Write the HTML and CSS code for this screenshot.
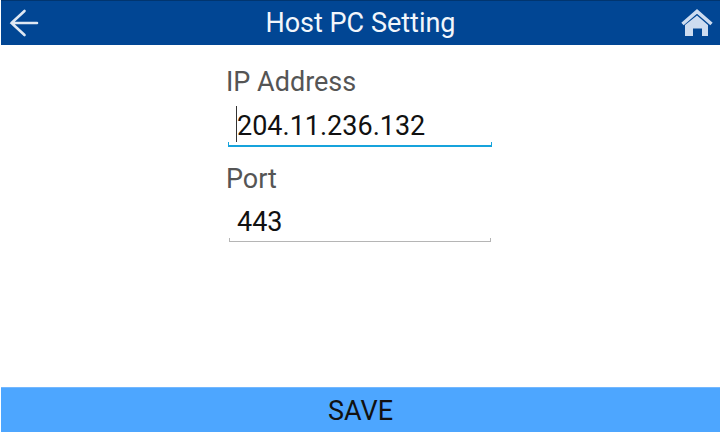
FILE: index.html
```html
<!DOCTYPE html>
<html lang="en">
<head>
<meta charset="utf-8">
<title>Host PC Setting</title>
<link rel="stylesheet" href="styles.css">
</head>
<body>
<div class="screen">
  <header class="topbar">
    <svg class="icon-back" width="40" height="44" viewBox="0 0 40 44" aria-hidden="true"><path d="M23.5 10 L10.5 22 L23.5 34 M10.5 22 H36" fill="none" stroke="#dfe8f3" stroke-width="2.6" stroke-linecap="round" stroke-linejoin="miter"/></svg>
    <h1 class="title">Host PC Setting</h1>
    <svg class="icon-home" width="34" height="44" viewBox="0 0 34 44" aria-hidden="true"><path d="M2.5 23 L17 10.5 L31.5 23" fill="none" stroke="#cddcf0" stroke-width="3.6"/><path d="M5 24 L17 14.5 L28 24 V35 H22 V27.5 H13 V35 H5 Z" fill="#cddcf0"/></svg>
  </header>
  <main class="form">
    <div class="field">
      <label class="label">IP Address</label>
      <div class="input active"><span class="caret"></span>204.11.236.132</div>
    </div>
    <div class="field">
      <label class="label">Port</label>
      <div class="input">443</div>
    </div>
  </main>
  <button class="save">SAVE</button>
</div>
</body>
</html>
```
FILE: styles.css
```css
* { box-sizing: border-box; }
html, body { margin: 0; padding: 0; background: #fff; }
body { width: 722px; height: 435px; overflow: hidden; font-family: Roboto, "Liberation Sans", sans-serif; }
.screen { display: flex; flex-direction: column; height: 432px; margin: 0 1px; width: 719px; }
.topbar { height: 45px; background: #014694; border-top: 1px solid #01356f; padding-right: 6px; display: flex; align-items: center; justify-content: space-between; flex: none; }
.title { margin: 0; font-size: 27px; font-weight: 400; color: #f2f6fb; line-height: 46px; }
.icon-back, .icon-home { flex: none; display: block; }
.form { flex: 1; display: flex; flex-direction: column; align-items: flex-start; padding: 21px 0 0 225px; gap: 16px; }
.field { display: flex; flex-direction: column; width: 266px; }
.label { font-size: 27px; line-height: 32px; color: #555; }
.input { position: relative; margin-left: 3px; height: 47px; width: 262px; padding: 13px 0 0 8px; font-size: 27px; line-height: 28px; color: #111; border-bottom: 1px solid #b5b5b5; }
.input::before, .input::after { content: ""; position: absolute; bottom: 0; width: 1px; height: 3px; background: #b5b5b5; }
.input::before { left: 0; }
.input::after { right: 0; }
.input.active { height: 49px; margin-left: 2px; width: 264px; padding: 14px 0 0 9px; border-bottom: 2px solid #17a3dc; }
.input.active::before, .input.active::after { background: #17a3dc; }
.caret { position: absolute; left: 8px; top: 8px; width: 1px; height: 36px; background: #333; }
.save { flex: none; height: 45px; border: 0; border-top: 1px solid #74b8ff; background: #4da6ff; color: #111; font: 400 27px/46px Roboto, "Liberation Sans", sans-serif; padding: 0; }
```
